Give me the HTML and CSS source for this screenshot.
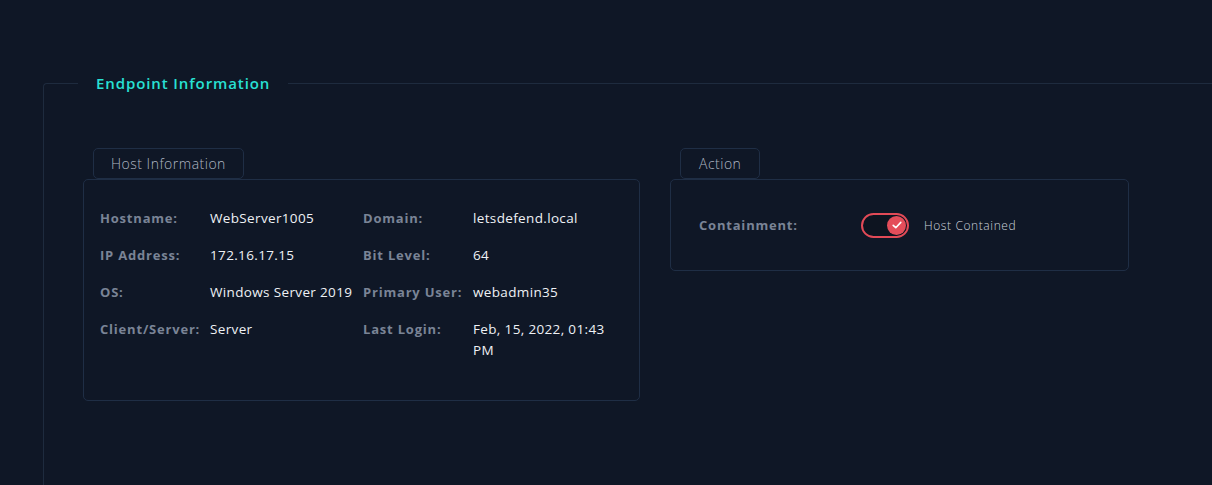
FILE: index.html
```html
<!DOCTYPE html>
<html lang="en">
<head>
<meta charset="utf-8">
<title>Endpoint Information</title>
<link rel="stylesheet" href="styles.css">
</head>
<body>
<fieldset class="section">
  <legend class="section-title">Endpoint Information</legend>
  <div class="panels">
    <div class="panel panel-host">
      <div class="tab">Host Information</div>
      <div class="card host-card">
        <div class="label">Hostname:</div><div class="value">WebServer1005</div>
        <div class="label">Domain:</div><div class="value">letsdefend.local</div>
        <div class="label">IP Address:</div><div class="value">172.16.17.15</div>
        <div class="label">Bit Level:</div><div class="value">64</div>
        <div class="label">OS:</div><div class="value">Windows Server 2019</div>
        <div class="label">Primary User:</div><div class="value">webadmin35</div>
        <div class="label">Client/Server:</div><div class="value">Server</div>
        <div class="label">Last Login:</div><div class="value">Feb, 15, 2022, 01:43 PM</div>
      </div>
    </div>
    <div class="panel panel-action">
      <div class="tab tab-action">Action</div>
      <div class="card action-card">
        <div class="label action-label">Containment:</div>
        <div class="toggle" role="switch" aria-checked="true">
          <span class="knob">
            <svg width="12" height="12" viewBox="0 0 12 12"><path d="M2.2 6.3 L4.8 8.7 L9.8 3.4" fill="none" stroke="#ffffff" stroke-width="1.6" stroke-linecap="round" stroke-linejoin="round"/></svg>
          </span>
        </div>
        <div class="toggle-text">Host Contained</div>
      </div>
    </div>
  </div>
</fieldset>
</body>
</html>
```

FILE: styles.css
```css
html, body {
  margin: 0;
  padding: 0;
  background: #0f1726;
  overflow: hidden;
  height: 100%;
}

body {
  font-family: "Open Sans", "Noto Sans", sans-serif;
  color: #e6eaf0;
}

.section {
  margin: 73px 0 0 43px;
  padding: 0 0 0 39px;
  width: calc(100vw - 43px);
  min-height: calc(100vh - 73px);
  border: 1px solid #1e2b3e;
  border-right: none;
  border-bottom: none;
  border-top-left-radius: 4px;
  box-sizing: border-box;
}

.section-title {
  margin-left: -5px;
  padding: 0 18px;
  font-size: 15px;
  line-height: 20px;
  font-weight: 600;
  letter-spacing: 0.9px;
  color: #28e0d4;
}

.panels {
  display: flex;
  gap: 30px;
  padding-top: 55px;
}

.panel {
  display: flex;
  flex-direction: column;
  align-items: flex-start;
}

.panel-host { width: 557px; }
.panel-action { width: 459px; }

.tab {
  margin-left: 10px;
  height: 31px;
  box-sizing: border-box;
  border: 1px solid #1f2e45;
  border-radius: 5px;
  padding: 0 17px;
  font-size: 14px;
  line-height: 29px;
  font-weight: 300;
  letter-spacing: 0.5px;
  color: #aeb6c2;
}

.tab-action {
  padding: 0 18px;
}

.card {
  align-self: stretch;
  border: 1px solid #1f2e45;
  border-radius: 5px;
  box-sizing: border-box;
}

.host-card {
  display: grid;
  grid-template-columns: 110px 153px 110px 1fr;
  row-gap: 16.5px;
  align-items: start;
  padding: 28px 17px 40px 16px;
  min-height: 222px;
}

.label {
  font-size: 13px;
  line-height: 20.5px;
  font-weight: 700;
  letter-spacing: 0.8px;
  color: #7a8496;
}

.value {
  font-size: 13.5px;
  line-height: 20.5px;
  font-weight: 400;
  letter-spacing: 0.35px;
  color: #eef1f5;
}

.action-card {
  display: flex;
  align-items: center;
  height: 92px;
  padding: 0 28px;
}

.action-label {
  width: 162px;
  flex: none;
}

.toggle {
  width: 48px;
  height: 25px;
  box-sizing: border-box;
  border: 2px solid #e24a57;
  border-radius: 13px;
  background: #0d1420;
  display: flex;
  align-items: center;
  justify-content: flex-end;
  padding-right: 1px;
  flex: none;
}

.knob {
  width: 19px;
  height: 19px;
  border-radius: 50%;
  background: #e44d5a;
  display: flex;
  align-items: center;
  justify-content: center;
}

.toggle-text {
  margin-left: 15px;
  font-size: 12px;
  font-weight: 300;
  letter-spacing: 0.6px;
  color: #cdd3dc;
}
```
